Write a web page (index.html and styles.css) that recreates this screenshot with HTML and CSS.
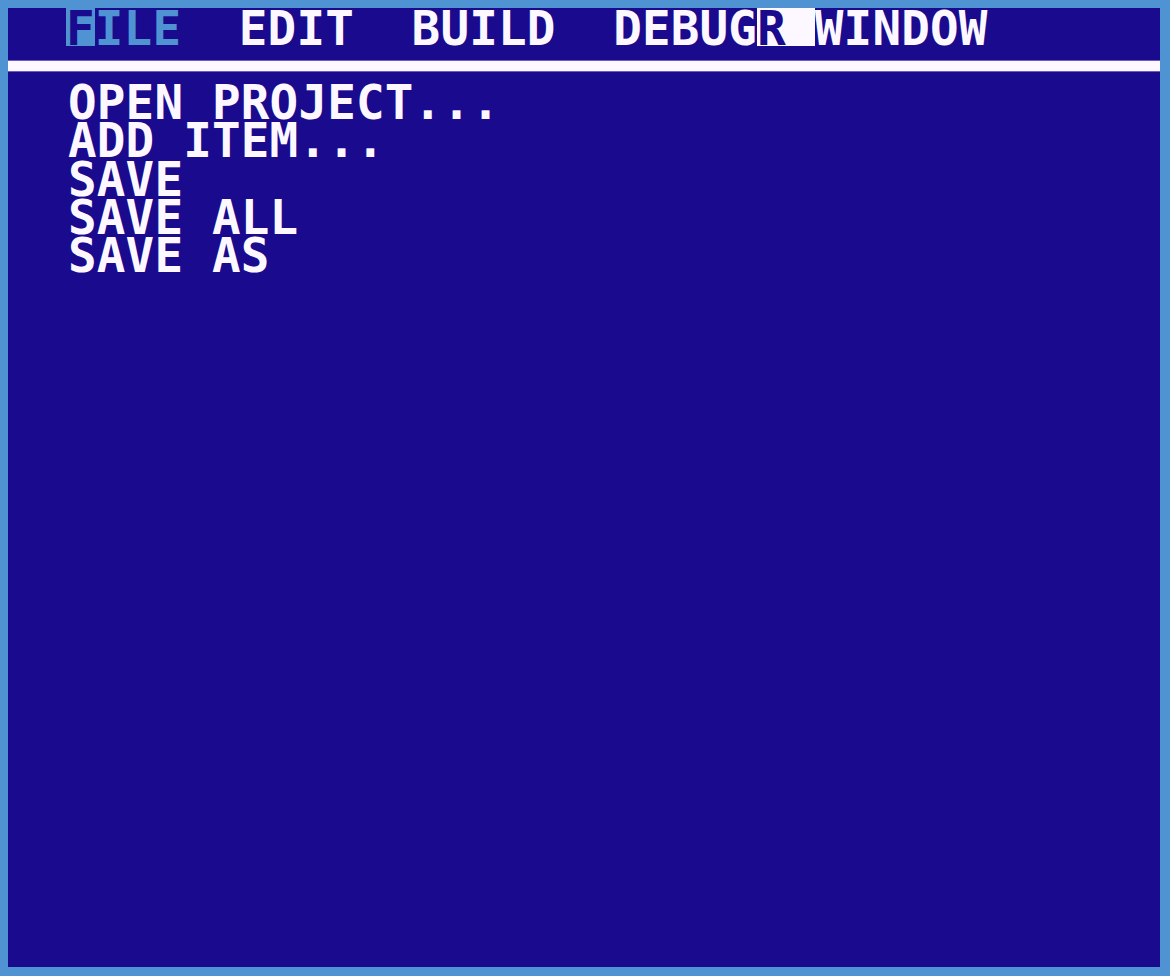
FILE: index.html
```html
<!DOCTYPE html>
<html>
<head>
<meta charset="utf-8">
<link rel="stylesheet" href="styles.css">
</head>
<body>
<div class="screen">
  <div class="menubar"><span class="cell-hl">F</span><span class="dim">ILE</span>  EDIT  BUILD  DEBUG<span class="cursor">R </span>WINDOW</div>
  <div class="rule"></div>
  <ul class="items">
    <li>OPEN PROJECT...</li>
    <li>ADD ITEM...</li>
    <li>SAVE</li>
    <li>SAVE ALL</li>
    <li>SAVE AS</li>
  </ul>
</div>
</body>
</html>
```
FILE: styles.css
```css
html, body {
  margin: 0;
  padding: 0;
}
body {
  background: #4f93d3;
  padding: 8px 10px 9px 8px;
  width: 1170px;
  height: 976px;
  box-sizing: border-box;
  overflow: hidden;
}
.screen {
  background: #1a0a8e;
  height: 959px;
  width: 1152px;
  color: #fdf8ff;
  font-family: "DejaVu Sans Mono", "Liberation Mono", monospace;
  font-weight: bold;
  font-size: 47.5px;
  letter-spacing: 0.2px;
  line-height: 38px;
}
.menubar {
  height: 53px;
  padding-left: 58px;
  white-space: pre;
  box-sizing: border-box;
}
.cell-hl, .cursor {
  display: inline-block;
  padding-top: 2px;
  height: 36px;
  line-height: 38px;
  vertical-align: baseline;
}
.cell-hl {
  background: #4f93d3;
  color: #1a0a8e;
}
.dim {
  color: #4f93d3;
}
.cursor {
  background: #fdf8ff;
  color: #1a0a8e;
  white-space: pre;
}
.rule {
  height: 10px;
  background: #fdf8ff;
  box-shadow: 0 -1px 0 #6a5cc0, 0 1px 0 #6a5cc0;
}
.items {
  list-style: none;
  margin: 0;
  padding: 13px 0 0 60px;
  line-height: 38.3px;
}
.items li {
  white-space: pre;
}
```
